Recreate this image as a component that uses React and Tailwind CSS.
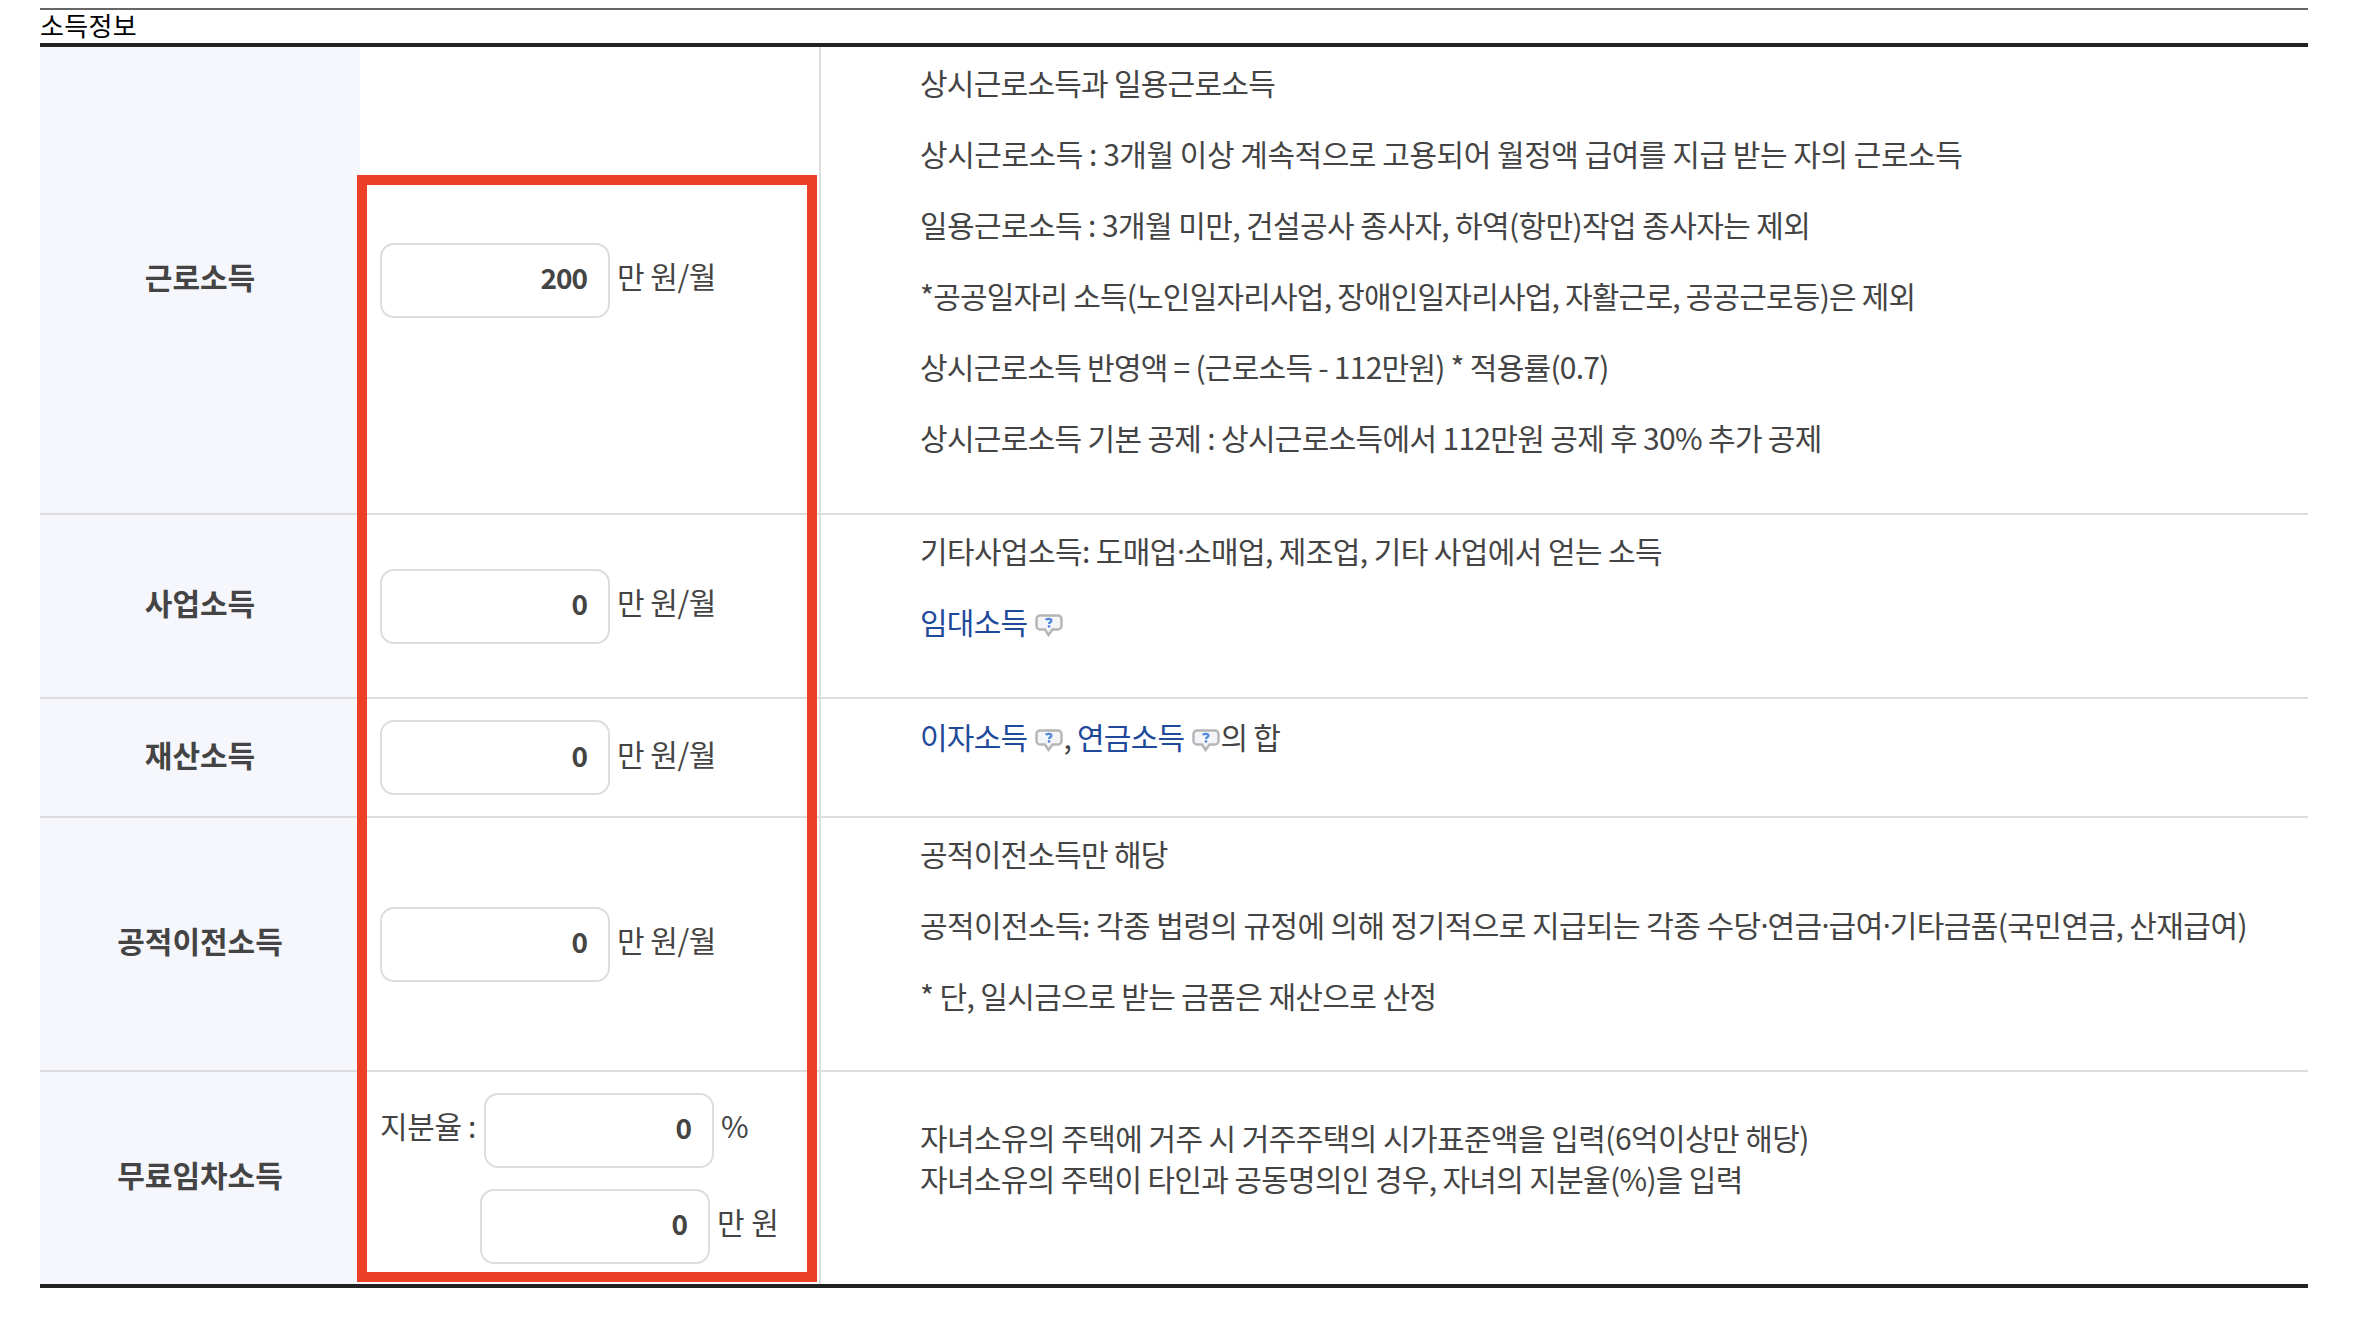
const font = '"Noto Sans CJK KR", "Noto Sans", sans-serif';

function Help() {
  return (
    <svg viewBox="0 0 28 23" className="inline-block w-[28px] h-[23px] align-[-3px] mx-[8px]">
      <path d="M5 1.5h18a3.5 3.5 0 0 1 3.5 3.5v7a3.5 3.5 0 0 1-3.5 3.5h-5.500L13.500 21 10 15.500H5A3.500 3.500 0 0 1 1.500 12V5A3.500 3.500 0 0 1 5 1.500z" fill="#f4f5f8" stroke="#b5b5b5" strokeWidth="2.400" />
      <path d="M10.800 6c.6-1.500 5.400-1.800 5.700.4.3 1.800-2.500 1.800-2.500 3.600" fill="none" stroke="#4f86dc" strokeWidth="2.200" />
      <rect x="12.800" y="11.200" width="2.400" height="2.400" fill="#4f86dc" />
    </svg>
  );
}

function Box({ value, className = "" }) {
  return (
    <div className={`w-[230px] h-[75px] border-2 border-[#dddddd] rounded-[14px] bg-white flex items-center justify-end pr-[21px] pb-[6px] font-bold text-[28px] tracking-[-1px] text-[#444444] shrink-0 ${className}`}>
      {value}
    </div>
  );
}

function Amount({ value, unit = "만 원/월" }) {
  return (
    <div className="flex items-center">
      <Box value={value} />
      <span className="ml-[7px] -mt-[9px] whitespace-nowrap tracking-[-0.5px]">{unit}</span>
    </div>
  );
}

function Row({ label, heightClass, noteClass = "", first = false, control, children }) {
  return (
    <div className={`flex ${heightClass} ${first ? "" : "border-t-2 border-[#dddddd]"}`}>
      <div className="w-[320px] shrink-0 bg-[#f5f7fc] flex items-center justify-center font-bold text-[#444444]">
        <span className="-mt-[7px]">{label}</span>
      </div>
      <div className="w-[461px] shrink-0 border-r-2 border-[#dddddd] pl-[20px] flex flex-col justify-center">
        {control}
      </div>
      <div className={`flex-1 pl-[99px] tracking-[-0.75px] whitespace-nowrap ${noteClass}`}>{children}</div>
    </div>
  );
}

function Line({ children, className = "" }) {
  return <p className={`h-[71px] leading-[71px] ${className}`}>{children}</p>;
}

const Dot = () => <span className="tracking-[-1px]" style={{ fontFamily: '"Noto Sans", sans-serif' }}>·</span>;
const Link = ({ children }) => <span className="text-[#1f4a9a]">{children}</span>;

export default function App() {
  return (
    <div className="w-[2358px] h-[1320px] bg-white pt-[8px] pl-[40px] pr-[50px] text-[30px] text-[#444444] overflow-hidden relative" style={{ fontFamily: font }}>
      <div className="border-t-2 border-[#666666] h-[33px] border-b-4 border-b-[#222222] box-content">
        <div className="text-[26px] leading-[33px] text-black tracking-[0.3px] h-[33px] -mt-[2px]">소득정보</div>
      </div>
      <div className="border-b-4 border-[#222222]">
        <Row first label="근로소득" heightClass="h-[466px]" control={<Amount value="200" />}>
          <Line>상시근로소득과 일용근로소득</Line>
          <Line className="tracking-[-0.47px]">상시근로소득 : 3개월 이상 계속적으로 고용되어 월정액 급여를 지급 받는 자의 근로소득</Line>
          <Line className="tracking-[-0.6px]">일용근로소득 : 3개월 미만, 건설공사 종사자, 하역(항만)작업 종사자는 제외</Line>
          <Line className="tracking-[-0.8px]">*공공일자리 소득(노인일자리사업, 장애인일자리사업, 자활근로, 공공근로등)은 제외</Line>
          <Line>상시근로소득 반영액 = (근로소득 - 112만원) * 적용률(0.7)</Line>
          <Line className="tracking-[-0.68px]">상시근로소득 기본 공제 : 상시근로소득에서 112만원 공제 후 30% 추가 공제</Line>
        </Row>
        <Row label="사업소득" heightClass="h-[184px]" control={<Amount value="0" />}>
          <Line className="tracking-[-0.6px]">기타사업소득: 도매업<Dot />소매업, 제조업, 기타 사업에서 얻는 소득</Line>
          <Line><Link>임대소득</Link><Help /></Line>
        </Row>
        <Row label="재산소득" heightClass="h-[119px]" noteClass="pt-[2px]" control={<Amount value="0" />}>
          <Line><Link>이자소득</Link><Help /><span className="-ml-[8px]">, </span><Link>연금소득</Link><Help /><span className="-ml-[8px]">의 합</span></Line>
        </Row>
        <Row label="공적이전소득" heightClass="h-[254px]" control={<Amount value="0" />}>
          <Line>공적이전소득만 해당</Line>
          <Line className="tracking-[-0.58px]">공적이전소득: 각종 법령의 규정에 의해 정기적으로 지급되는 각종 수당<Dot />연금<Dot />급여<Dot />기타금품(국민연금, 산재급여)</Line>
          <Line className="tracking-[-0.62px]">* 단, 일시금으로 받는 금품은 재산으로 산정</Line>
        </Row>
        <Row
          label="무료임차소득"
          heightClass="h-[214px]"
          noteClass="flex flex-col justify-center leading-[41px] pb-[41px]"
          control={
            <div className="flex flex-col gap-[21px]">
              <div className="flex items-center">
                <span className="w-[104px] -mt-[9px] whitespace-nowrap tracking-[-0.4px]">지분율 :</span>
                <Box value="0" />
                <span className="ml-[7px] -mt-[9px]">%</span>
              </div>
              <div className="flex items-center pl-[100px]">
                <Box value="0" />
                <span className="ml-[7px] -mt-[9px] whitespace-nowrap">만 원</span>
              </div>
            </div>
          }
        >
          <p className="tracking-[-0.58px]">자녀소유의 주택에 거주 시 거주주택의 시가표준액을 입력(6억이상만 해당)</p>
          <p className="tracking-[-0.68px]">자녀소유의 주택이 타인과 공동명의인 경우, 자녀의 지분율(%)을 입력</p>
        </Row>
      </div>
      <div className="absolute left-[357px] top-[175px] w-[460px] h-[1107px] border-[10px] border-[#ec4027] pointer-events-none" />
    </div>
  );
}
